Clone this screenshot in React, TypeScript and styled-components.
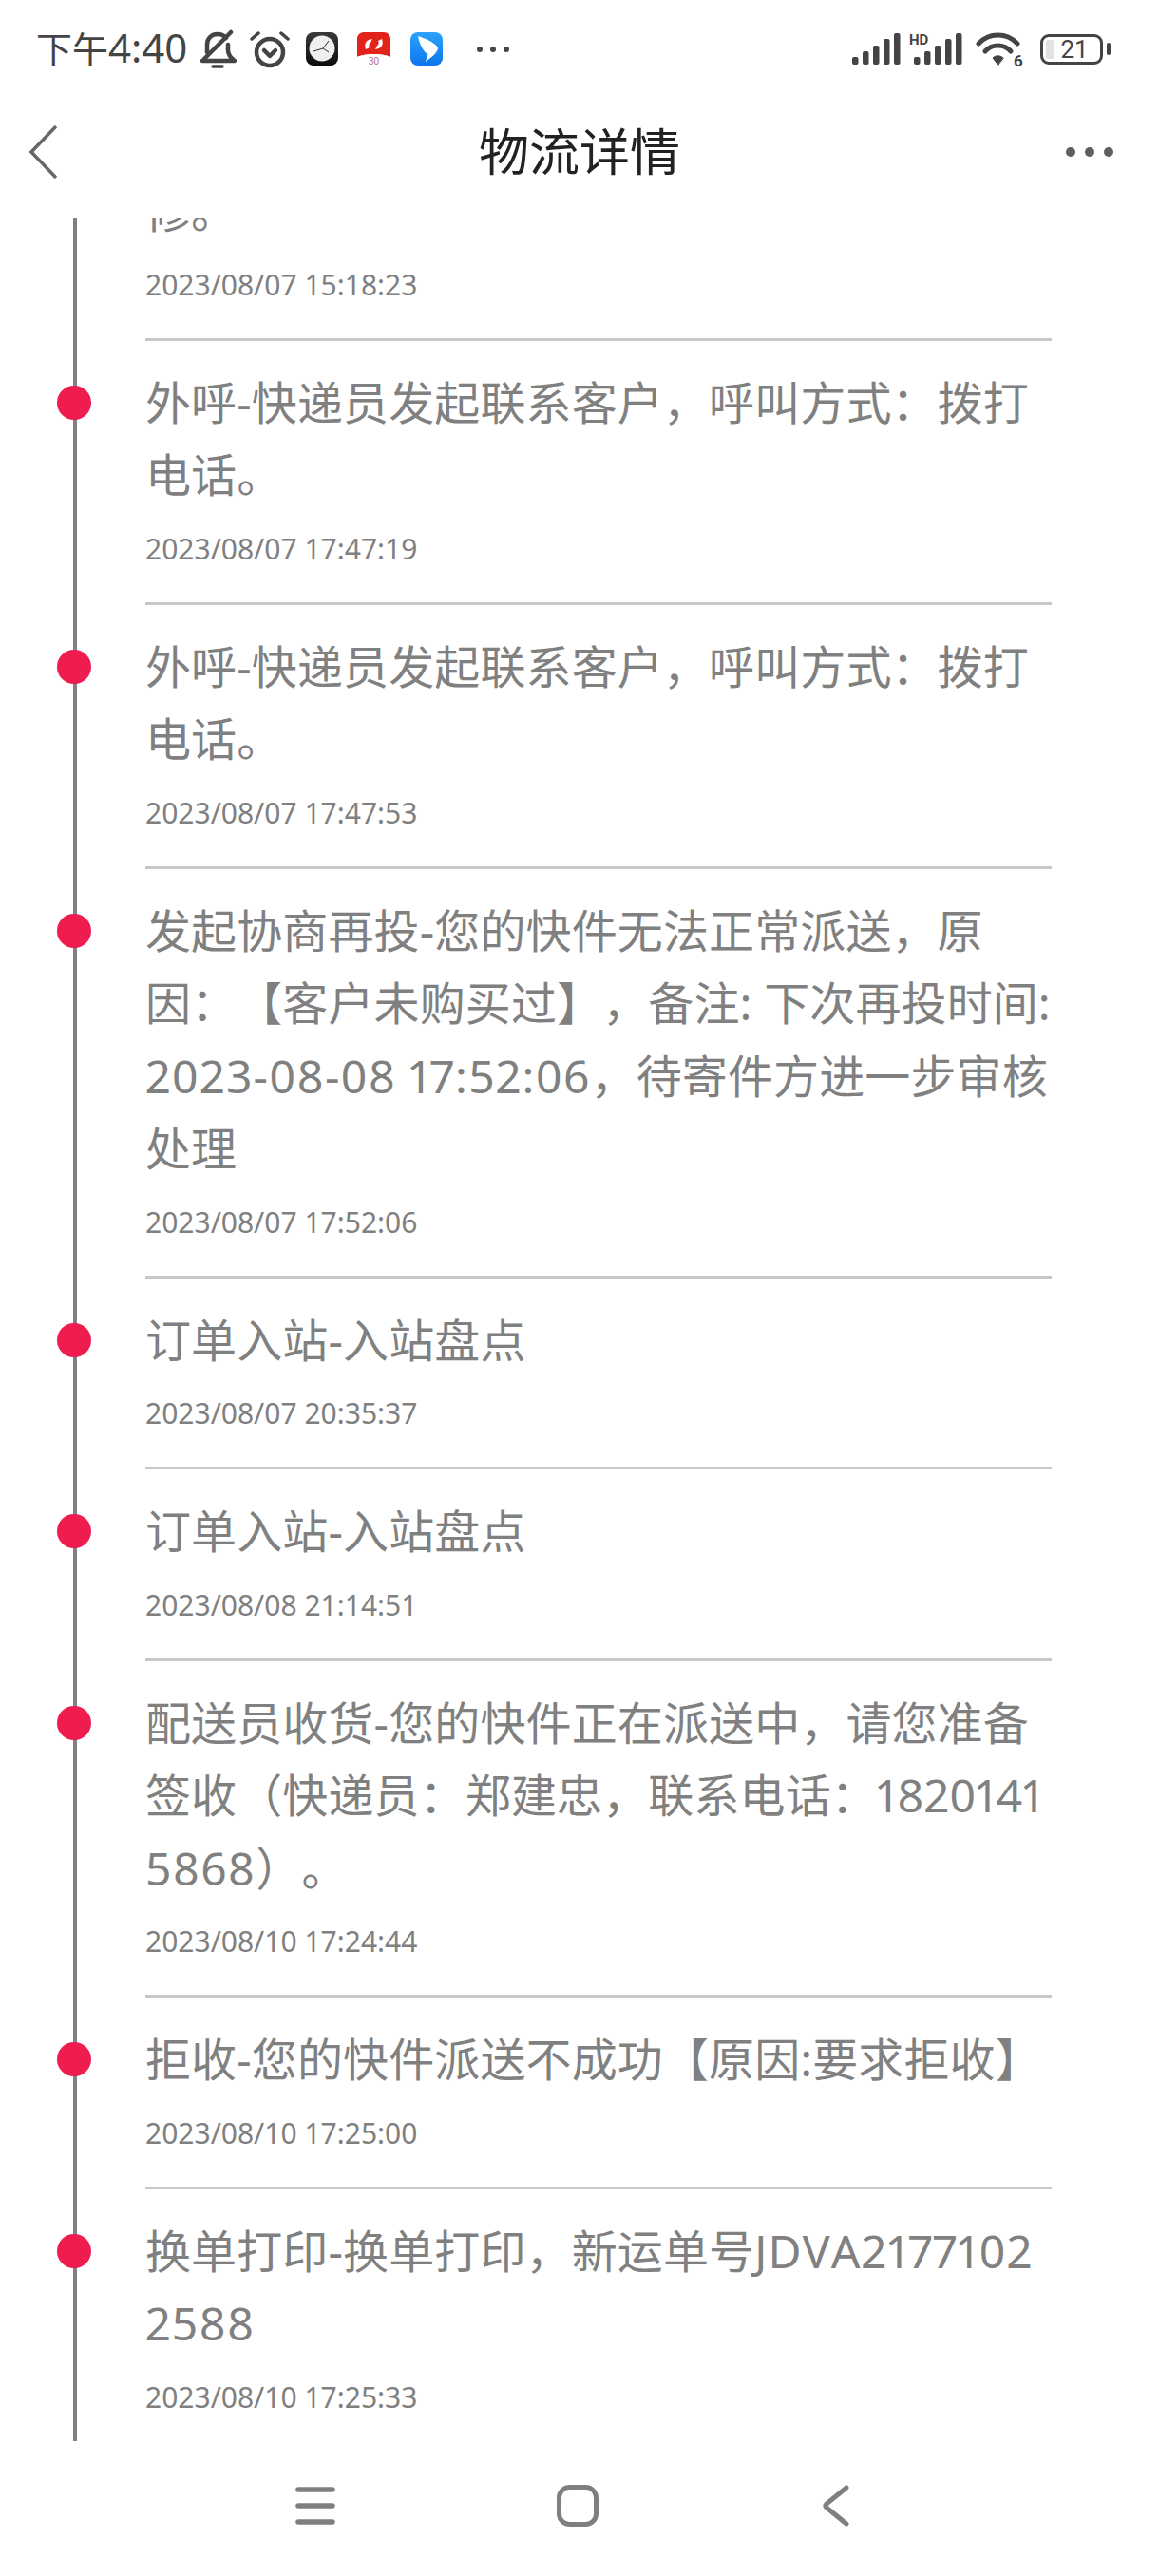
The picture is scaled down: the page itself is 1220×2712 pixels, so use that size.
import React from "react";
import styled, { createGlobalStyle } from "styled-components";

const GlobalStyle = createGlobalStyle`
	html, body {
		margin: 0;
		padding: 0;
		background: #ffffff;
	}
	body {
		font-family: "Noto Sans", "Noto Sans CJK SC", sans-serif;
	}
`;

const Page = styled.div`
	width: 1220px;
	height: 2712px;
	display: flex;
	flex-direction: column;
	overflow: hidden;
	background: #ffffff;
`;

const StatusBar = styled.div`
	height: 100px;
	flex: none;
	display: flex;
	align-items: center;
	padding: 3px 59px 0 38px;
	box-sizing: border-box;
	color: #444444;
`;

const Clock = styled.span`
	font-size: 38px;
	line-height: 100px;
	margin: -3px 12px 0 0;
`;

const ClockDigits = styled.span`
	font-size: 42px;
`;

const StatusSlot = styled.span<{ $gap?: number }>`
	display: flex;
	align-items: center;
	margin-right: ${(props) => props.$gap ?? 0}px;
`;

const StatusSpacer = styled.span`
	flex: 1;
`;

const Battery = styled.span`
	position: relative;
	width: 66px;
	height: 32px;
	box-sizing: border-box;
	border: 3.5px solid #444444;
	border-radius: 9px;
	display: flex;
	align-items: center;
	justify-content: center;
	font-size: 26px;
	line-height: 1;
	color: #444444;
	&::after {
		content: "";
		position: absolute;
		right: -11px;
		top: 6px;
		width: 4px;
		height: 13px;
		border-radius: 2px;
		background: #444444;
	}
`;

const BatteryLevel = styled.span`
	position: absolute;
	left: 3px;
	top: 3px;
	bottom: 3px;
	width: 9px;
	background: #e2e2e2;
	border-radius: 2px;
`;

const BatteryText = styled.span`
	position: relative;
	margin-left: 6px;
	font-family: Roboto, sans-serif;
`;

const Header = styled.div`
	height: 130px;
	flex: none;
	display: grid;
	grid-template-columns: 1fr auto 1fr;
	align-items: center;
	padding-bottom: 10px;
	box-sizing: border-box;
`;

const HeaderButton = styled.span<{ $end?: boolean }>`
	display: flex;
	justify-content: ${(props) => (props.$end ? "flex-end" : "flex-start")};
	padding: ${(props) => (props.$end ? "0 48px 0 0" : "0 0 0 30px")};
`;

const Title = styled.div`
	font-size: 53px;
	line-height: 70px;
	color: #222222;
`;

const Feed = styled.div`
	flex: 1;
	position: relative;
	overflow: hidden;
`;

const Rail = styled.div`
	position: absolute;
	left: 77px;
	top: 0;
	bottom: 0;
	width: 4px;
	background: #808080;
`;

const List = styled.div`
	position: relative;
	margin-top: -73px;
`;

const Row = styled.div`
	display: grid;
	grid-template-columns: 153px 954px;
`;

const Dot = styled.span`
	width: 36px;
	height: 36px;
	margin: 47px 0 0 60px;
	border-radius: 50%;
	background: #ee1c4f;
`;

const Body = styled.div`
	padding: 27px 0 35px;
	border-bottom: 3px solid #c8c8c8;
`;

const MessageLine = styled.div`
	font-size: 48px;
	line-height: 76.5px;
	color: #808080;
	white-space: nowrap;
	letter-spacing: 0.12px;
	text-spacing-trim: space-all;
	font-kerning: none;
	font-variant-numeric: proportional-nums;
`;

const Numeric = styled.span`
	letter-spacing: 1.2px;
`;

const Time = styled.div`
	margin-top: 18px;
	font-size: 30px;
	line-height: 42px;
	color: #808080;
`;

const NavBar = styled.div`
	height: 142px;
	flex: none;
	display: grid;
	grid-template-columns: 332px 276px 1fr;
	align-items: center;
	padding-bottom: 6px;
	box-sizing: border-box;
`;

const NavCell = styled.span<{ $shift?: number }>`
	display: flex;
	margin-left: ${(props) => props.$shift ?? 0}px;
	svg {
		flex: none;
	}
`;

const BellOff = () => (
	<svg width="40" height="42" viewBox="0 0 40 42" fill="none" stroke="#444" strokeWidth="4.5" strokeLinecap="round" strokeLinejoin="round">
		<path d="M9 24V16C9 9 14 5 20 5C24 5 27 6.5 29 9" />
		<path d="M31 16V22C31 26 34 30 38 33H4" />
		<path d="M34 3L6 31" />
		<path d="M15 39H25" strokeWidth="3.5" />
	</svg>
);

const AlarmClock = () => (
	<svg width="42" height="40" viewBox="0 0 42 40" fill="none" stroke="#444" strokeLinecap="round" strokeLinejoin="round">
		<circle cx="21" cy="23" r="14" strokeWidth="4.5" />
		<path d="M15 21L21 27L27 21" strokeWidth="4.5" />
		<path d="M2 9L9 3" strokeWidth="3.5" />
		<path d="M40 9L33 3" strokeWidth="3.5" />
	</svg>
);

const ClockApp = () => (
	<svg width="34" height="35" viewBox="0 0 34 35">
		<defs>
			<linearGradient id="clockBg" x1="0" y1="0" x2="0" y2="1">
				<stop offset="0" stopColor="#3a3a3a" />
				<stop offset="1" stopColor="#0c0c0c" />
			</linearGradient>
		</defs>
		<rect width="34" height="35" rx="8" fill="url(#clockBg)" />
		<circle cx="17" cy="17" r="13.5" fill="#f1efee" />
		<path d="M18 17L24 9M18 17L8 20M18 17L24 21" stroke="#333" strokeWidth="1" fill="none" />
	</svg>
);

const RedApp = () => (
	<svg width="35" height="36" viewBox="0 0 35 36">
		<path d="M0 7C0 3 3 0 7 0H28C32 0 35 3 35 7V26C27 22 8 22 0 26Z" fill="#e2231a" />
		<path d="M0 26C8 22 27 22 35 26V36H0Z" fill="#ffffff" />
		<path d="M9 18C7 12 9 8 16 7L14 11C12 12 12 14 13 16ZM26 7C28 13 26 17 19 18L21 14C23 13 23 11 22 9Z" fill="#ffffff" />
		<text x="17.5" y="34" fontSize="10" textAnchor="middle" fill="#b06a9a" fontFamily="Liberation Sans, sans-serif">30</text>
	</svg>
);

const BlueApp = () => (
	<svg width="34" height="35" viewBox="0 0 34 35">
		<defs>
			<linearGradient id="blueBg" x1="0" y1="0" x2="0" y2="1">
				<stop offset="0" stopColor="#2ca2fb" />
				<stop offset="1" stopColor="#0c76ee" />
			</linearGradient>
		</defs>
		<rect width="34" height="35" rx="8" fill="url(#blueBg)" />
		<path d="M8 4C14 6 25 10 29 16C29 21 24 25 16 31C17 27 19 25 18 23C14 20 10 14 8 4Z" fill="#ffffff" />
	</svg>
);

const MoreDots = () => (
	<svg width="36" height="8" viewBox="0 0 36 8" fill="#444">
		<circle cx="4" cy="4" r="3" />
		<circle cx="18" cy="4" r="3" />
		<circle cx="32" cy="4" r="3" />
	</svg>
);

const SIGNAL_BARS = [
	{ x: 0, top: 25 },
	{ x: 11, top: 19 },
	{ x: 22, top: 13 },
	{ x: 33, top: 6 },
	{ x: 44, top: 0 },
];

const Signal: React.FC<{ hd?: boolean }> = ({ hd }) => (
	<svg width="51" height="33" viewBox="0 0 51 33" fill="#444" overflow="visible">
		{SIGNAL_BARS.map((bar) => (
			<rect key={bar.x} x={bar.x} y={bar.top} width="6.5" height={33 - bar.top} rx="2" />
		))}
		{hd && (
			<text x="-5" y="12" fontSize="15" fontWeight="700" fontFamily="Roboto, sans-serif">HD</text>
		)}
	</svg>
);

const Wifi = () => (
	<svg width="52" height="44" viewBox="0 0 52 44" fill="none" stroke="#444" strokeWidth="5" strokeLinecap="round">
		<path d="M3 16C14 4 33 4 44 16" />
		<path d="M10 24C17 16 30 16 37 24" />
		<path d="M23.5 38L18 31C21 28 26 28 29 31Z" fill="#444" strokeWidth="1" strokeLinejoin="round" />
		<text x="40" y="40" fontSize="17" fontWeight="700" fontFamily="Roboto, sans-serif" fill="#444" stroke="none">6</text>
	</svg>
);

const BackArrow = () => (
	<svg width="30" height="56" viewBox="0 0 30 56" fill="none" stroke="#666" strokeWidth="3.5">
		<path d="M29 1L3 28L29 55" />
	</svg>
);

const HeaderDots = () => (
	<svg width="50" height="10" viewBox="0 0 50 10" fill="#5f5f5f">
		<circle cx="5" cy="5" r="5" />
		<circle cx="25" cy="5" r="5" />
		<circle cx="45" cy="5" r="5" />
	</svg>
);

const NavMenu = () => (
	<svg width="42" height="40" viewBox="0 0 42 40" fill="none" stroke="#7f7f7f" strokeWidth="5.5" strokeLinecap="round">
		<path d="M3 3H39" />
		<path d="M3 20H39" />
		<path d="M3 37H39" />
	</svg>
);

const NavHome = () => (
	<svg width="44" height="44" viewBox="0 0 44 44" fill="none" stroke="#7f7f7f" strokeWidth="5">
		<rect x="2.5" y="2.5" width="39" height="39" rx="11" />
	</svg>
);

const NavBack = () => (
	<svg width="30" height="44" viewBox="0 0 30 44" fill="none" stroke="#7f7f7f" strokeWidth="5" strokeLinecap="round" strokeLinejoin="round">
		<path d="M27 3L6 20Q3.5 22 6 24L27 41" />
	</svg>
);

const events: { lines: React.ReactNode[]; time: string; hideDot?: boolean }[] = [
	{ lines: ["修。"], time: "2023/08/07 15:18:23", hideDot: true },
	{ lines: ["外呼-快递员发起联系客户，呼叫方式：拨打", "电话。"], time: "2023/08/07 17:47:19" },
	{ lines: ["外呼-快递员发起联系客户，呼叫方式：拨打", "电话。"], time: "2023/08/07 17:47:53" },
	{
		lines: [
			"发起协商再投-您的快件无法正常派送，原",
			"因：【客户未购买过】，备注: 下次再投时间:",
			<><Numeric>2023-08-08 17:52:06</Numeric>，待寄件方进一步审核</>,
			"处理",
		],
		time: "2023/08/07 17:52:06",
	},
	{ lines: ["订单入站-入站盘点"], time: "2023/08/07 20:35:37" },
	{ lines: ["订单入站-入站盘点"], time: "2023/08/08 21:14:51" },
	{
		lines: [
			"配送员收货-您的快件正在派送中，请您准备",
			"签收（快递员：郑建忠，联系电话：1820141",
			<><Numeric>5868</Numeric>）。</>,
		],
		time: "2023/08/10 17:24:44",
	},
	{ lines: ["拒收-您的快件派送不成功【原因:要求拒收】"], time: "2023/08/10 17:25:00" },
	{
		lines: [
			<>换单打印-换单打印，新运单号<Numeric>JDVA2177102</Numeric></>,
			<Numeric>2588</Numeric>,
		],
		time: "2023/08/10 17:25:33",
	},
];

export default function App() {
	return (
		<Page>
			<GlobalStyle />
			<StatusBar>
				<Clock>下午<ClockDigits>4:40</ClockDigits></Clock>
				<StatusSlot $gap={14}><BellOff /></StatusSlot>
				<StatusSlot $gap={17}><AlarmClock /></StatusSlot>
				<StatusSlot $gap={20}><ClockApp /></StatusSlot>
				<StatusSlot $gap={21}><RedApp /></StatusSlot>
				<StatusSlot $gap={35}><BlueApp /></StatusSlot>
				<StatusSlot><MoreDots /></StatusSlot>
				<StatusSpacer />
				<StatusSlot $gap={14}><Signal /></StatusSlot>
				<StatusSlot $gap={14}><Signal hd /></StatusSlot>
				<StatusSlot $gap={16}><Wifi /></StatusSlot>
				<StatusSlot>
					<Battery>
						<BatteryLevel />
						<BatteryText>21</BatteryText>
					</Battery>
				</StatusSlot>
			</StatusBar>
			<Header>
				<HeaderButton><BackArrow /></HeaderButton>
				<Title>物流详情</Title>
				<HeaderButton $end><HeaderDots /></HeaderButton>
			</Header>
			<Feed>
				<Rail />
				<List>
					{events.map((event) => (
						<Row key={event.time}>
							{event.hideDot ? <span /> : <Dot />}
							<Body>
								{event.lines.map((line, index) => (
									<MessageLine key={index}>{line}</MessageLine>
								))}
								<Time>{event.time}</Time>
							</Body>
						</Row>
					))}
				</List>
			</Feed>
			<NavBar>
				<NavCell $shift={311}><NavMenu /></NavCell>
				<NavCell $shift={254}><NavHome /></NavCell>
				<NavCell $shift={256}><NavBack /></NavCell>
			</NavBar>
		</Page>
	);
}
